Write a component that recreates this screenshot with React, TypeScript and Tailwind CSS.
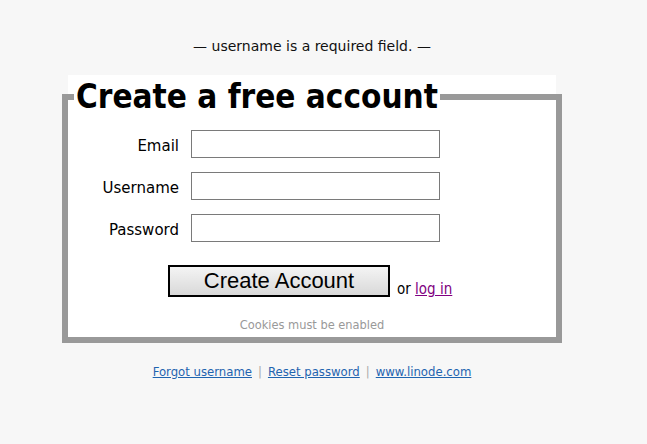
const FONT = "font-['DejaVu_Sans',sans-serif] [font-stretch:condensed]";

function Field({ label, type = "text" }: { label: string; type?: string }) {
  return (
    <>
      <label className="h-[28px] flex items-center justify-end pt-[4px] text-[15px] [font-stretch:normal] text-black">{label}</label>
      <input
        type={type}
        className="h-[28px] w-[249px] border border-[#7a7a7a] bg-white px-1 outline-none"
      />
    </>
  );
}

export default function App() {
  return (
    <div className={`min-h-[444px] w-full bg-[#f7f7f7] ${FONT}`}>
      <div className="w-[624px] flex flex-col items-center pt-[36px]">
        <p className="text-[14px] leading-[20px] [font-stretch:normal] text-[#111]">— username is a required field. —</p>

        <div className="mt-[19px] w-[488px] bg-white pt-[3px]">
          <fieldset className="-mx-[6px] border-[6px] border-[#999] bg-white pb-[4px]">
            <legend className="ml-[6px] px-[2px] text-[33px] leading-[38px] font-bold text-black">
              Create a free account
            </legend>

            <div className="mt-[14px] grid grid-cols-[111px_249px] gap-x-[12px] gap-y-[14px]">
              <Field label="Email" />
              <Field label="Username" />
              <Field label="Password" type="password" />
            </div>

            <div className="mt-[23px] ml-[100px] flex items-end gap-[7px]">
              <button className="h-[32px] w-[222px] border-2 border-black bg-gradient-to-b from-[#f4f4f4] to-[#d9d9d9] font-['Liberation_Sans',Arial,sans-serif] text-[22px] leading-none text-black">
                Create Account
              </button>
              <span className="text-[15px] leading-[20px] -mb-[2px] text-black">
                or{" "}
                <a href="#" className="text-[#800080] underline">
                  log in
                </a>
              </span>
            </div>

            <p className="mt-[20px] text-center text-[12.7px] leading-[16px] text-[#999]">Cookies must be enabled</p>
          </fieldset>
        </div>

        <div className="mt-[20px] flex items-center gap-[6px] text-[13px] leading-[18px]">
          <a href="#" className="text-[#1f64b0] underline">Forgot username</a>
          <span className="text-[#aaa]">|</span>
          <a href="#" className="text-[#1f64b0] underline">Reset password</a>
          <span className="text-[#aaa]">|</span>
          <a href="#" className="text-[#1f64b0] underline">www.linode.com</a>
        </div>
      </div>
    </div>
  );
}
